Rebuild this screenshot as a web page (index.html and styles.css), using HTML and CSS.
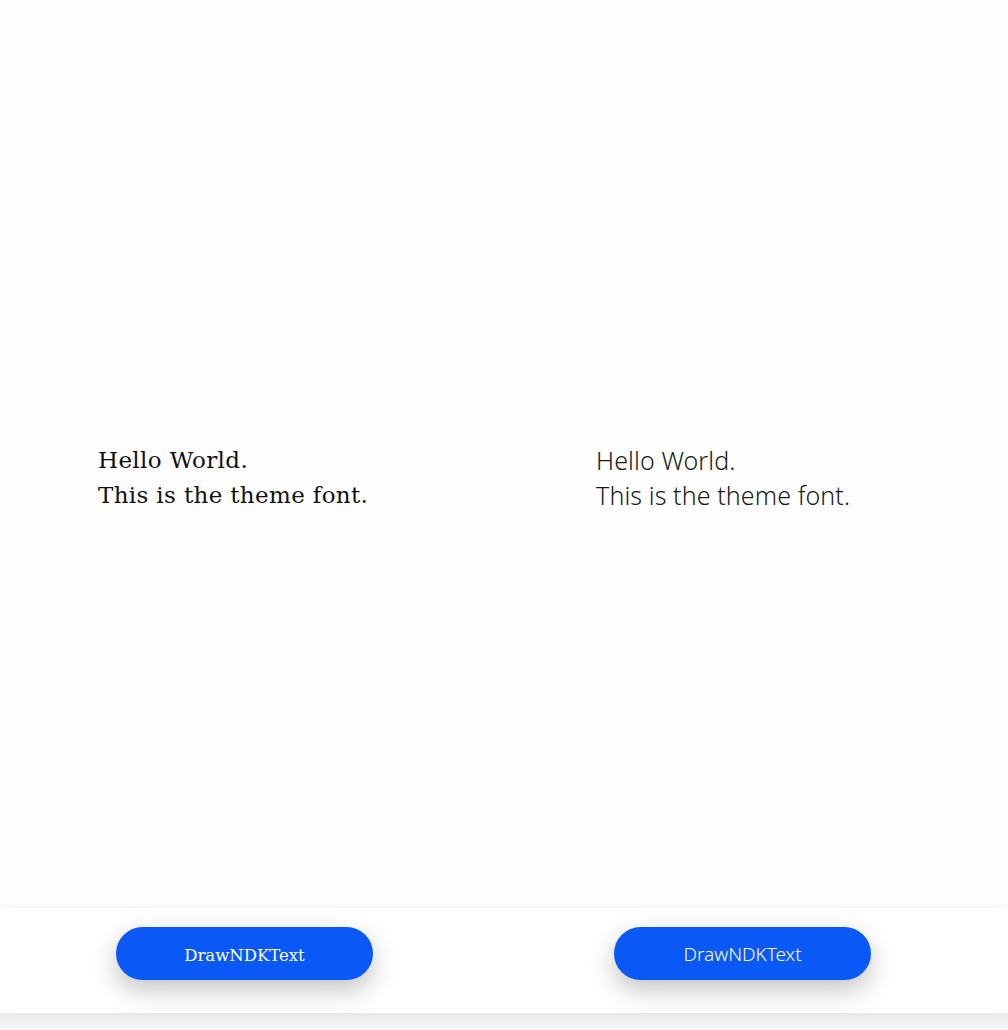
FILE: index.html
```html
<!DOCTYPE html>
<html>
<head>
<meta charset="utf-8">
<link rel="stylesheet" href="styles.css">
</head>
<body>
<div class="page">
  <main class="content">
    <div class="col col-left">
      <p class="sample serif">Hello World.<br>This is the theme font.</p>
    </div>
    <div class="col col-right">
      <p class="sample theme">Hello World.<br>This is the theme font.</p>
    </div>
  </main>
  <footer class="bar">
    <div class="cell cell-left"><button class="btn serif-btn">DrawNDKText</button></div>
    <div class="cell cell-right"><button class="btn theme-btn">DrawNDKText</button></div>
  </footer>
  <div class="bottom"></div>
</div>
</body>
</html>
```
FILE: styles.css
```css
* { box-sizing: border-box; }
html, body { margin: 0; padding: 0; }
body { background: #fefefe; width: 1008px; height: 1030px; overflow: hidden; }
.page { display: flex; flex-direction: column; height: 1030px; }
.content { height: 908px; display: flex; }
.col { width: 504px; padding-top: 443px; }
.col-left { padding-left: 98px; }
.col-right { padding-left: 92px; }
.sample { margin: 0; line-height: 35px; color: #111; }
.serif { font-family: "DejaVu Serif", serif; font-size: 23px; letter-spacing: 0.35px; }
.theme { font-family: "Noto Sans", sans-serif; font-weight: 300; font-size: 25px; letter-spacing: 0.1px; color: #1a1a1a; }
.bar { height: 105px; background: #fff; display: flex; box-shadow: 0 0 12px rgba(0,0,0,0.06); position: relative; z-index: 1; }
.cell { width: 504px; padding-top: 19px; }
.cell-left { padding-left: 116px; }
.cell-right { padding-left: 110px; }
.btn { width: 257px; height: 53px; border: none; border-radius: 27px; background: #0a59f7; color: #fff; box-shadow: 0 10px 26px rgba(0,0,0,0.24); display: flex; align-items: center; justify-content: center; padding: 0; }
.serif-btn { font-family: "DejaVu Serif", serif; font-size: 16.5px; padding-top: 3px; }
.theme-btn { font-family: "Noto Sans", sans-serif; font-weight: 300; font-size: 19px; letter-spacing: 0px; }
.bottom { flex: 1; background: linear-gradient(#eeeeee, #f6f6f6); }
```
